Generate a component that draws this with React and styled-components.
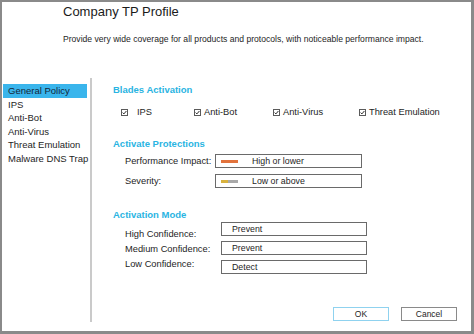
import React from 'react';
import styled, { createGlobalStyle } from 'styled-components';

const GlobalStyle = createGlobalStyle`
  html, body {
    margin: 0;
    padding: 0;
    background: #ffffff;
  }
  body {
    font-family: 'Liberation Sans', Arial, sans-serif;
    color: #1e1e1e;
  }
  * {
    box-sizing: border-box;
  }
`;

const Window = styled.div`
  width: 474px;
  height: 334px;
  border-style: solid;
  border-color: #8a8a8a;
  border-width: 2px 3px 3px 2px;
  background: #ffffff;
  display: flex;
  flex-direction: column;
`;

const Header = styled.header`
  height: 76px;
  padding: 2px 0 0 61px;
`;

const Title = styled.h1`
  margin: 0;
  font-size: 13px;
  line-height: 15px;
  font-weight: normal;
  color: #1a1a1a;
`;

const Description = styled.p`
  margin: 15px 0 0;
  font-size: 8.6px;
  line-height: 11px;
  color: #1e1e1e;
`;

const Body = styled.div`
  flex: 1;
  display: flex;
  align-items: flex-start;
`;

const Sidebar = styled.ul`
  list-style: none;
  margin: 0;
  padding: 6px 3px 0 1px;
  width: 90px;
  height: 244px;
  border-right: 2px solid #cacaca;
`;

const NavItem = styled.li`
  height: 13.6px;
  line-height: 13.6px;
  padding-left: 5px;
  font-size: 9.5px;
  white-space: nowrap;
  background: ${(p) => (p.$active ? '#3ab5ec' : 'transparent')};
  color: ${(p) => (p.$active ? '#14263a' : '#1e1e1e')};
`;

const Main = styled.main`
  flex: 1;
  height: 100%;
  display: flex;
  flex-direction: column;
  padding: 6px 14px 10px 21px;
`;

const SectionTitle = styled.h2`
  margin: ${(p) => p.$top || 0}px 0 0;
  font-size: 9.5px;
  line-height: 12px;
  font-weight: bold;
  color: #2ab4e2;
`;

const BladeRow = styled.div`
  margin-top: 10px;
  padding-left: 8px;
  display: grid;
  grid-template-columns: 73px 79px 86px auto;
  height: 12px;
  align-items: center;
`;

const Blade = styled.label`
  display: flex;
  align-items: center;
  gap: ${(p) => p.$gap || 3}px;
  font-size: 9.3px;
  white-space: nowrap;
`;

const ProtectionGrid = styled.div`
  margin-top: 4px;
  padding-left: 12px;
  display: grid;
  grid-template-columns: 90px 147px;
  grid-auto-rows: 14px;
  row-gap: 6px;
  align-items: center;
`;

const FieldLabel = styled.span`
  font-size: 9.3px;
  white-space: nowrap;
`;

const Field = styled.div`
  height: 14px;
  border: 1px solid #6a6a6a;
  display: flex;
  align-items: center;
  font-size: 8.8px;
  color: #1e1e1e;
  padding-left: ${(p) => p.$pad || 5}px;
`;

const Swatch = styled.span`
  width: 17px;
  height: 3px;
  margin-right: 14px;
  background: ${(p) => p.$color};
`;

const ModeBlock = styled.div`
  margin-top: 1px;
  padding-left: 12px;
  display: flex;
`;

const ModeLabels = styled.div`
  width: 96px;
  padding-top: 5px;
  display: flex;
  flex-direction: column;
`;

const ModeLabel = styled.span`
  height: 15px;
  line-height: 15px;
  font-size: 9.3px;
  white-space: nowrap;
`;

const ModeFields = styled.div`
  width: 146px;
  display: flex;
  flex-direction: column;
  gap: 5px;
`;

const Footer = styled.div`
  margin-top: auto;
  display: flex;
  justify-content: flex-end;
  gap: 12px;
`;

const Button = styled.button`
  width: 56px;
  height: 14px;
  padding: 0;
  background: #ffffff;
  border: 1px solid ${(p) => (p.$primary ? '#8fd2ef' : '#8a8a8a')};
  font-family: 'Liberation Sans', Arial, sans-serif;
  font-size: 8.5px;
  line-height: 12px;
  color: #1e1e1e;
`;

function CheckBox() {
  return (
    <svg width="7" height="7" viewBox="0 0 7 7" aria-hidden="true">
      <rect x="0.5" y="0.5" width="6" height="6" fill="#fff" stroke="#5a5a5a" />
      <path d="M1.6 3.6 L2.9 4.9 L5.4 2" fill="none" stroke="#2a2a2a" strokeWidth="1" />
    </svg>
  );
}

const navItems = ['General Policy', 'IPS', 'Anti-Bot', 'Anti-Virus', 'Threat Emulation', 'Malware DNS Trap'];

const blades = [
  { name: 'IPS', gap: 9 },
  { name: 'Anti-Bot' },
  { name: 'Anti-Virus' },
  { name: 'Threat Emulation' },
];

const modes = [
  { label: 'High Confidence:', value: 'Prevent' },
  { label: 'Medium Confidence:', value: 'Prevent' },
  { label: 'Low Confidence:', value: 'Detect' },
];

export default function App() {
  return (
    <>
      <GlobalStyle />
      <Window>
        <Header>
          <Title>Company TP Profile</Title>
          <Description>
            Provide very wide coverage for all products and protocols, with noticeable performance impact.
          </Description>
        </Header>
        <Body>
          <Sidebar>
            {navItems.map((item, i) => (
              <NavItem key={item} $active={i === 0}>
                {item}
              </NavItem>
            ))}
          </Sidebar>
          <Main>
            <SectionTitle>Blades Activation</SectionTitle>
            <BladeRow>
              {blades.map((b) => (
                <Blade key={b.name} $gap={b.gap}>
                  <CheckBox />
                  {b.name}
                </Blade>
              ))}
            </BladeRow>

            <SectionTitle $top={20}>Activate Protections</SectionTitle>
            <ProtectionGrid>
              <FieldLabel>Performance Impact:</FieldLabel>
              <Field>
                <Swatch $color="#e2733c" />
                High or lower
              </Field>
              <FieldLabel>Severity:</FieldLabel>
              <Field>
                <Swatch $color="linear-gradient(to right, #d8b23e 0 40%, #a9a9a9 40%)" />
                Low or above
              </Field>
            </ProtectionGrid>

            <SectionTitle $top={21}>Activation Mode</SectionTitle>
            <ModeBlock>
              <ModeLabels>
                {modes.map((m) => (
                  <ModeLabel key={m.label}>{m.label}</ModeLabel>
                ))}
              </ModeLabels>
              <ModeFields>
                {modes.map((m) => (
                  <Field key={m.label} $pad={10}>
                    {m.value}
                  </Field>
                ))}
              </ModeFields>
            </ModeBlock>

            <Footer>
              <Button $primary>OK</Button>
              <Button>Cancel</Button>
            </Footer>
          </Main>
        </Body>
      </Window>
    </>
  );
}
